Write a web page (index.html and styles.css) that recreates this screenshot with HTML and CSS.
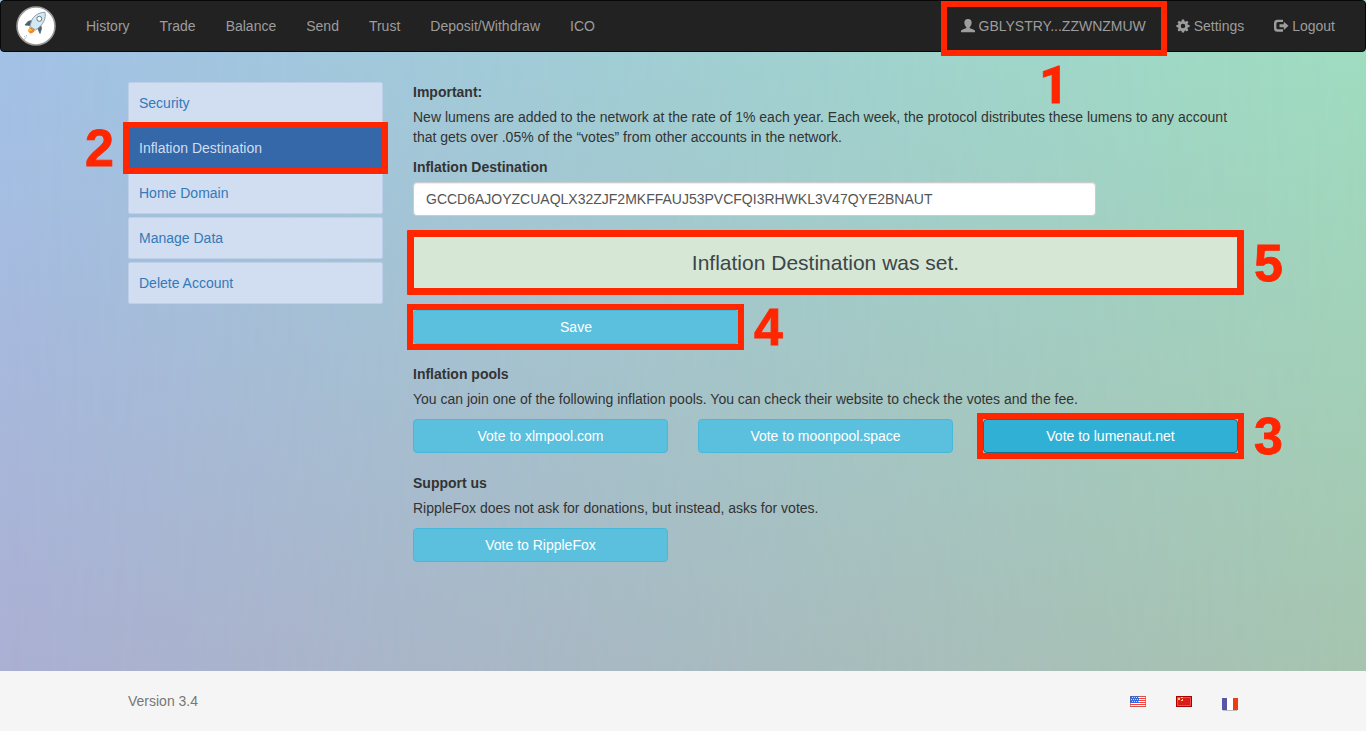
FILE: index.html
```html
<!DOCTYPE html>
<html lang="en">
<head>
<meta charset="utf-8">
<title>Inflation Destination</title>
<link rel="stylesheet" href="styles.css">
</head>
<body>
<div class="backdrop"></div>
<div class="page">
  <nav class="navbar">
    <a class="brand" href="#">
      <svg width="40" height="40" viewBox="0 0 40 40">
        <circle cx="20" cy="20" r="19" fill="#fff" stroke="#999" stroke-width="1.6"/>
        <path d="M15.500 14.500L12 15.500L9 19L14 19.500ZM22 23L24 27.500L25.500 22.500L25 20Z" fill="#4d606c" stroke="#4d606c" stroke-width=".8"/>
        <path d="M13.500 21L12 25L14.500 27.800L18 26L19 23.500Z" fill="#f7861d"/>
        <path d="M13.500 22L12.800 25.500L16 24.500Z" fill="#ffc933"/>
        <path d="M29 6.300C23 6.300 17.500 9.500 15.500 15L13.800 20.300L19.500 24L24 20.500C28 16.500 30 12 29 6.300Z" fill="#d2e9f2" stroke="#7f95a0" stroke-width=".9"/>
        <circle cx="23.300" cy="12.800" r="2.500" fill="#fff" stroke="#637985"/>
        <path d="M8 34L10.500 30.500M10 30L11 29M8 31L9 30" stroke="#aaa" stroke-width=".7"/>
      </svg>
    </a>
    <div class="nav-links">
      <a href="#">History</a><a href="#">Trade</a><a href="#">Balance</a><a href="#">Send</a><a href="#">Trust</a><a href="#">Deposit/Withdraw</a><a href="#">ICO</a>
    </div>
    <div class="nav-links nav-right">
      <a href="#"><svg class="icon" viewBox="0 0 14 14"><path d="M7 0C4.200 0 3.100 1.800 3.400 4.200C3.600 6 4.400 7.300 5.300 8V9C4.500 9.800 1.200 10.300 .3 11.300Q-.2 12 0 13.300H14Q14.200 12 13.700 11.300C12.800 10.300 9.500 9.800 8.700 9V8C9.600 7.300 10.400 6 10.600 4.200C10.900 1.800 9.800 0 7 0Z"/></svg> GBLYSTRY...ZZWNZMUW</a>
      <a href="#"><svg class="icon" viewBox="0 0 14 14"><path fill-rule="evenodd" d="M5.900 .5H8.100L8.500 2.300L9.500 2.700L11 1.700L12.500 3.200L11.400 4.700L11.800 5.700L13.600 6V8.100L11.800 8.500L11.400 9.500L12.400 11L10.900 12.500L9.500 11.500L8.400 11.900L8.100 13.600H5.900L5.500 11.900L4.500 11.500L3 12.500L1.500 11L2.500 9.500L2.100 8.500L.4 8.100V6L2.100 5.700L2.500 4.700L1.500 3.200L3 1.700L4.500 2.700L5.500 2.300ZM7 4.700A2.300 2.300 0 1 0 7 9.300A2.300 2.300 0 1 0 7 4.700Z"/></svg> Settings</a>
      <a href="#"><svg class="icon" viewBox="0 0 14 14"><path d="M9 .7H3.500Q0 .7 0 4.200V9.200Q0 12.700 3.500 12.700H9V10.300H4Q2.400 10.300 2.400 8.700V4.700Q2.400 3.100 4 3.100H9Z"/><path d="M9.800 2.700L14.500 6.800L9.800 10.900V8.300H5.500V5.300H9.800Z"/></svg> Logout</a>
    </div>
  </nav>

  <main class="container">
    <ul class="side-menu">
      <li><a href="#">Security</a></li>
      <li><a class="active" href="#">Inflation Destination</a></li>
      <li><a href="#">Home Domain</a></li>
      <li><a href="#">Manage Data</a></li>
      <li><a href="#">Delete Account</a></li>
    </ul>
    <section class="content">
      <h2>Important:</h2>
      <p>New lumens are added to the network at the rate of 1% each year. Each week, the protocol distributes these lumens to any account that gets over .05% of the “votes” from other accounts in the network.</p>
      <label for="dest">Inflation Destination</label>
      <input id="dest" type="text" value="GCCD6AJOYZCUAQLX32ZJF2MKFFAUJ53PVCFQI3RHWKL3V47QYE2BNAUT">
      <div class="alert">Inflation Destination was set.</div>
      <button class="btn save">Save</button>
      <h2>Inflation pools</h2>
      <p>You can join one of the following inflation pools. You can check their website to check the votes and the fee.</p>
      <div class="pools">
        <button class="btn">Vote to xlmpool.com</button>
        <button class="btn">Vote to moonpool.space</button>
        <button class="btn pressed">Vote to lumenaut.net</button>
      </div>
      <h2>Support us</h2>
      <p>RippleFox does not ask for donations, but instead, asks for votes.</p>
      <div class="pools">
        <button class="btn">Vote to RippleFox</button>
      </div>
    </section>
  </main>

  <footer class="footer">
    <span>Version 3.4</span>
    <div class="flags">
      <svg width="16" height="11" viewBox="0 0 16 11"><path fill="#fff" d="M0 0H16V11H0Z"/><path d="M0 .5H16M0 2.500H16M0 4.500H16M0 6.500H16M0 8.500H16M0 10.500H16" stroke="#f8403c"/><path fill="#2f6ae0" d="M0 0H9V7H0Z"/><path d="M2 1.500H9M1 3.500H9M2 5.500H9" stroke="#cfe0ff" stroke-dasharray="1 1"/><path d="M.5 .5H15.500V10.500H.5Z" fill="none" stroke="#b8604e" stroke-opacity=".7"/><path d="M.5 7V.5H9" fill="none" stroke="#5560b8"/></svg>
      <svg width="16" height="11" viewBox="0 0 16 11"><path fill="#db1c1c" d="M0 0H16V11H0Z"/><path d="M1.500 1.500H14.500V9.500H1.500Z" fill="none" stroke="#e85050"/><path d="M.5 .5H15.500V10.500H.5Z" fill="none" stroke="#a80000"/><path d="M2 2H4V4H2ZM5 1H7V2H5ZM6 3H7V5H5V4H6Z" fill="#ffd94a"/></svg>
      <svg class="flag-fr" width="16" height="13" viewBox="0 0 16 13"><path fill="#fff" d="M0 0H16V12H0Z"/><path fill="#5b55a8" d="M0 0H5V12H0Z"/><path fill="#f03c14" d="M11 0H16V12H11Z"/><path fill="#bbb" d="M1 12H15V13H1Z"/></svg>
    </div>
  </footer>
</div>

<div class="callout frame-account"></div>
<div class="callout frame-menu"></div>
<div class="callout frame-vote"></div>
<div class="callout frame-save"></div>
<div class="callout frame-result"></div>
<span class="step step-1">1</span>
<span class="step step-2">2</span>
<span class="step step-3">3</span>
<span class="step step-4">4</span>
<span class="step step-5">5</span>
</body>
</html>
```
FILE: styles.css
```css
* { box-sizing: border-box; }
body {
  margin: 0;
  position: relative;
  height: 731px;
  overflow: hidden;
  font: 14px/20px "Liberation Sans", Arial, sans-serif;
  color: #333;
  background: linear-gradient(#a2c3e8, #abb0d3 671px);
}
a { text-decoration: none; }
.backdrop {
  position: absolute;
  inset: 0;
  background: linear-gradient(#9edec1, #a6c4af 671px);
  -webkit-mask-image: linear-gradient(to right, transparent, #000);
  mask-image: linear-gradient(to right, transparent, #000);
}
.page {
  position: relative;
  display: flex;
  flex-direction: column;
  height: 731px;
}
.navbar {
  display: flex;
  height: 52px;
  padding: 0 15px;
  background: #222;
  border: 1px solid #080808;
  border-radius: 4px;
}
.brand { width: 55px; padding-top: 5px; }
.brand svg { display: block; }
.nav-links { display: flex; }
.nav-links a { padding: 15px; color: #9d9d9d; white-space: nowrap; }
.nav-right { margin-left: auto; }
.icon {
  width: 14px;
  height: 14px;
  vertical-align: -2px;
  fill: #9d9d9d;
  overflow: visible;
}
.container {
  display: flex;
  gap: 30px;
  width: 1110px;
  margin: 30px auto 0;
  flex: 1;
}
.side-menu {
  width: 255px;
  margin: 0;
  padding: 0;
  list-style: none;
}
.side-menu li { margin-bottom: 3px; }
.side-menu a {
  display: block;
  padding: 10px;
  border: 1px solid #becfe8;
  border-radius: 2px;
  background: #d1ddf1;
  color: #337ab7;
}
.side-menu .active {
  background: #3468a9;
  border-color: #3468a9;
  color: #d1ddf1;
}
.content { width: 825px; }
h2, label {
  display: block;
  margin: 0 0 5px;
  font-size: 14px;
  line-height: 20px;
  font-weight: 700;
}
p { margin: 0 0 10px; }
input {
  display: block;
  width: 683px;
  height: 34px;
  padding: 6px 12px;
  font: inherit;
  color: #555;
  background: #fff;
  border: 1px solid #ccc;
  border-radius: 4px;
  box-shadow: inset 0 1px 1px rgba(0, 0, 0, .075);
}
.alert {
  height: 54px;
  margin: 20px 0;
  font-size: 21px;
  line-height: 54px;
  text-align: center;
  color: #3c4549;
  background: #d6e7d5;
  border-radius: 4px;
}
.btn {
  width: 255px;
  height: 34px;
  padding: 6px 12px;
  font: inherit;
  color: #fff;
  background: #5bc0de;
  border: 1px solid #46b8da;
  border-radius: 4px;
}
.save { display: block; width: 326px; margin-bottom: 20px; }
.pressed { background: #31b0d5; border-color: #1b6d85; }
.pools { display: flex; gap: 30px; margin-bottom: 20px; }
.footer {
  display: flex;
  justify-content: space-between;
  height: 60px;
  padding: 20px 128px;
  background: #f5f5f5;
  color: #777;
}
.flags { display: flex; gap: 30px; padding-top: 5px; }
.flag-fr { margin-top: 2px; }

/* Tutorial markers drawn over the page */
.callout { position: absolute; border: 6px solid #ff2600; }
.frame-account { left: 941px; top: 1px; width: 226px; height: 55px; }
.frame-menu { left: 123px; top: 122px; width: 265px; height: 52px; }
.frame-vote { left: 977px; top: 413px; width: 267px; height: 46px; }
.frame-save { left: 407px; top: 304px; width: 337px; height: 46px; }
.frame-result { left: 407px; top: 230px; width: 837px; height: 65px; border-width: 7px; border-radius: 1px; }
.step {
  position: absolute;
  font: 700 52px/40px "Liberation Sans", Arial, sans-serif;
  color: #ff2600;
  -webkit-text-stroke: .8px #ff2600;
}
.step-1 { left: 1039px; top: 66px; font-family: Roboto, sans-serif; }
.step-2 { left: 85px; top: 128px; }
.step-3 { left: 1254px; top: 416px; }
.step-4 { left: 754px; top: 307px; }
.step-5 { left: 1254px; top: 243px; }
```
